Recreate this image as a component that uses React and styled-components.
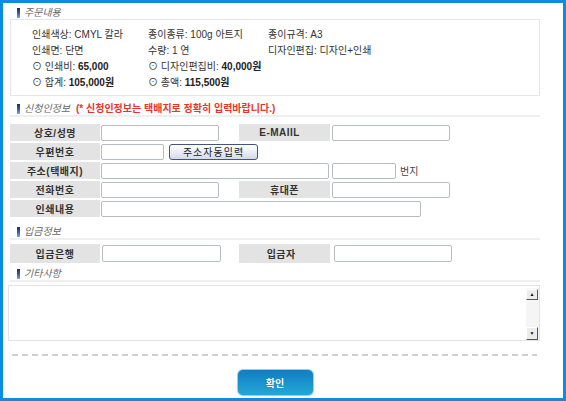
import React from "react";
import styled, { createGlobalStyle } from "styled-components";

const GlobalStyle = createGlobalStyle`
  html, body {
    margin: 0;
    padding: 0;
    background: #fff;
  }
  body {
    font-family: "Liberation Sans", "Noto Sans CJK KR", sans-serif;
    font-size: 10px;
    color: #333;
  }
`;

const Frame = styled.div`
  box-sizing: border-box;
  width: 566px;
  height: 401px;
  border: 3px solid #0b8de4;
  padding: 5px 23px 0 7px;
  display: flex;
  flex-direction: column;
  background: #fff;
`;

const Header = styled.div`
  display: flex;
  align-items: flex-start;
  gap: 4px;
  height: 11px;
  padding-left: 7px;
  margin-top: ${(p) => p.$top || 0}px;
  border-bottom: ${(p) => (p.$line ? "2px solid #efefef" : "none")};
`;

const Bar = styled.span`
  display: block;
  width: 3px;
  height: 10px;
  background: linear-gradient(#1d2c66, #3c5fae 55%, #7fa6e3);
`;

const HeaderText = styled.span`
  font-size: 10px;
  line-height: 10px;
  color: #666;
  font-style: italic;
`;

const Notice = styled.span`
  font-size: 10px;
  line-height: 10px;
  color: #e8332a;
  font-weight: bold;
  margin-left: 2px;
`;

const OrderBox = styled.div`
  border: 1px solid #e6e6e6;
  height: 77px;
  box-sizing: border-box;
  padding: 5px 0 0 21px;
  display: grid;
  grid-template-columns: 116px 120px 1fr;
  grid-auto-rows: 16px;
  align-items: center;
`;

const Item = styled.span`
  font-size: 10px;
  color: #333;
  white-space: nowrap;
  b {
    font-weight: bold;
    color: #222;
  }
`;

const Form = styled.div`
  margin-top: ${(p) => p.$top || 0}px;
  display: flex;
  flex-direction: column;
  gap: 2px;
`;

const Row = styled.div`
  display: grid;
  grid-template-columns: 90px 139px 91px 1fr;
  height: ${(p) => p.$h || 17}px;
`;

const Label = styled.div`
  background: #e3e3e3;
  display: flex;
  align-items: center;
  justify-content: center;
  font-weight: bold;
  font-size: 10px;
  letter-spacing: 0.5px;
  color: #333;
  white-space: nowrap;
`;

const Field = styled.div`
  display: flex;
  align-items: center;
  gap: ${(p) => p.$gap || 0}px;
  padding-left: ${(p) => p.$pad ?? 1}px;
  grid-column: ${(p) => (p.$span ? "2 / 5" : "auto")};
`;

const Input = styled.div`
  box-sizing: border-box;
  width: ${(p) => p.$w}px;
  height: ${(p) => p.$h || 16}px;
  border: 1px solid #b7bcc2;
  border-radius: 2px;
  background: #fff;
  margin-left: ${(p) => p.$ml || 0}px;
`;

const SmallButton = styled.div`
  box-sizing: border-box;
  width: 89px;
  height: 16px;
  margin-left: 5px;
  border: 1px solid #45557a;
  border-radius: 3px;
  background: linear-gradient(#ffffff, #e9edf5 50%, #d3dae8);
  display: flex;
  align-items: center;
  justify-content: center;
  font-size: 10px;
  letter-spacing: 1px;
  color: #222;
`;

const Suffix = styled.span`
  margin-left: 4px;
  font-size: 10px;
  color: #444;
`;

const Memo = styled.div`
  margin: 3px 0 0 -2px;
  height: 56px;
  box-sizing: border-box;
  border: 1px solid #e4e4e4;
  display: flex;
  justify-content: flex-end;
  padding: 2px 0 0;
`;

const Scroll = styled.div`
  width: 13px;
  background: #f5f5f5;
  display: flex;
  flex-direction: column;
  justify-content: space-between;
  padding-bottom: 0;
`;

const ScrollBtn = styled.div`
  box-sizing: border-box;
  width: 12px;
  height: ${(p) => p.$h || 11}px;
  margin-top: ${(p) => p.$mt || 0}px;
  background: #ececec;
  border: 1px solid;
  border-color: #fff #555 #555 #fff;
  display: flex;
  align-items: center;
  justify-content: center;
  font-size: 5px;
  line-height: 5px;
  color: #111;
`;

const Dashes = styled.div`
  margin: 13px 3px 0 2px;
  height: 2px;
  background: repeating-linear-gradient(
    to right,
    #cfcfcf 0 6px,
    transparent 6px 10px
  );
`;

const Footer = styled.div`
  display: flex;
  justify-content: center;
  margin-top: 13px;
`;

const Confirm = styled.div`
  box-sizing: border-box;
  width: 77px;
  height: 27px;
  border-radius: 6px;
  border: 1px solid #8fd0ef;
  background: linear-gradient(#127dc2, #1a93cc 50%, #22a7d6);
  display: flex;
  align-items: center;
  justify-content: center;
  color: #fff;
  font-weight: bold;
  font-size: 10px;
  text-shadow: 0 0 1px #0a5f95;
`;

function App() {
  return (
    <>
      <GlobalStyle />
      <Frame>
        <Header>
          <Bar />
          <HeaderText>주문내용</HeaderText>
        </Header>
        <OrderBox>
          <Item>인쇄색상: CMYL 칼라</Item>
          <Item>종이종류: 100g 아트지</Item>
          <Item>종이규격: A3</Item>
          <Item>인쇄면: 단면</Item>
          <Item>수량: 1 연</Item>
          <Item>디자인편집: 디자인+인쇄</Item>
          <Item>
            ⊙ 인쇄비: <b>65,000</b>
          </Item>
          <Item>
            ⊙ 디자인편집비: <b>40,000원</b>
          </Item>
          <span />
          <Item>
            ⊙ 합계: <b>105,000원</b>
          </Item>
          <Item>
            ⊙ 총액: <b>115,500원</b>
          </Item>
        </OrderBox>

        <Header $top={8} $line>
          <Bar />
          <HeaderText>신청인정보</HeaderText>
          <Notice>(* 신청인정보는 택배지로 정확히 입력바랍니다.)</Notice>
        </Header>
        <Form $top={7}>
          <Row>
            <Label>상호/성명</Label>
            <Field>
              <Input $w={118} />
            </Field>
            <Label>E-MAIIL&nbsp;&nbsp;&nbsp;</Label>
            <Field $pad={2}>
              <Input $w={118} />
            </Field>
          </Row>
          <Row>
            <Label>우편번호</Label>
            <Field $span>
              <Input $w={63} />
              <SmallButton>주소자동입력</SmallButton>
            </Field>
          </Row>
          <Row>
            <Label>주소(택배지)</Label>
            <Field $span>
              <Input $w={228} />
              <Input $w={64} $ml={3} />
              <Suffix>번지</Suffix>
            </Field>
          </Row>
          <Row>
            <Label>전화번호</Label>
            <Field>
              <Input $w={118} />
            </Field>
            <Label>휴대폰</Label>
            <Field $pad={2}>
              <Input $w={118} />
            </Field>
          </Row>
          <Row>
            <Label>인쇄내용</Label>
            <Field $span>
              <Input $w={320} />
            </Field>
          </Row>
        </Form>

        <Header $top={10} $line>
          <Bar />
          <HeaderText>입금정보</HeaderText>
        </Header>
        <Form $top={4}>
          <Row $h={19}>
            <Label>입금은행</Label>
            <Field $pad={2}>
              <Input $w={119} $h={17} />
            </Field>
            <Label>입금자&nbsp;&nbsp;</Label>
            <Field $pad={4}>
              <Input $w={118} $h={17} />
            </Field>
          </Row>
        </Form>

        <Header $top={6} $line>
          <Bar />
          <HeaderText>기타사항</HeaderText>
        </Header>
        <Memo>
          <Scroll>
            <ScrollBtn $mt={1}>▲</ScrollBtn>
            <ScrollBtn $h={13}>▼</ScrollBtn>
          </Scroll>
        </Memo>

        <Dashes />
        <Footer>
          <Confirm>확인</Confirm>
        </Footer>
      </Frame>
    </>
  );
}

export default App;
